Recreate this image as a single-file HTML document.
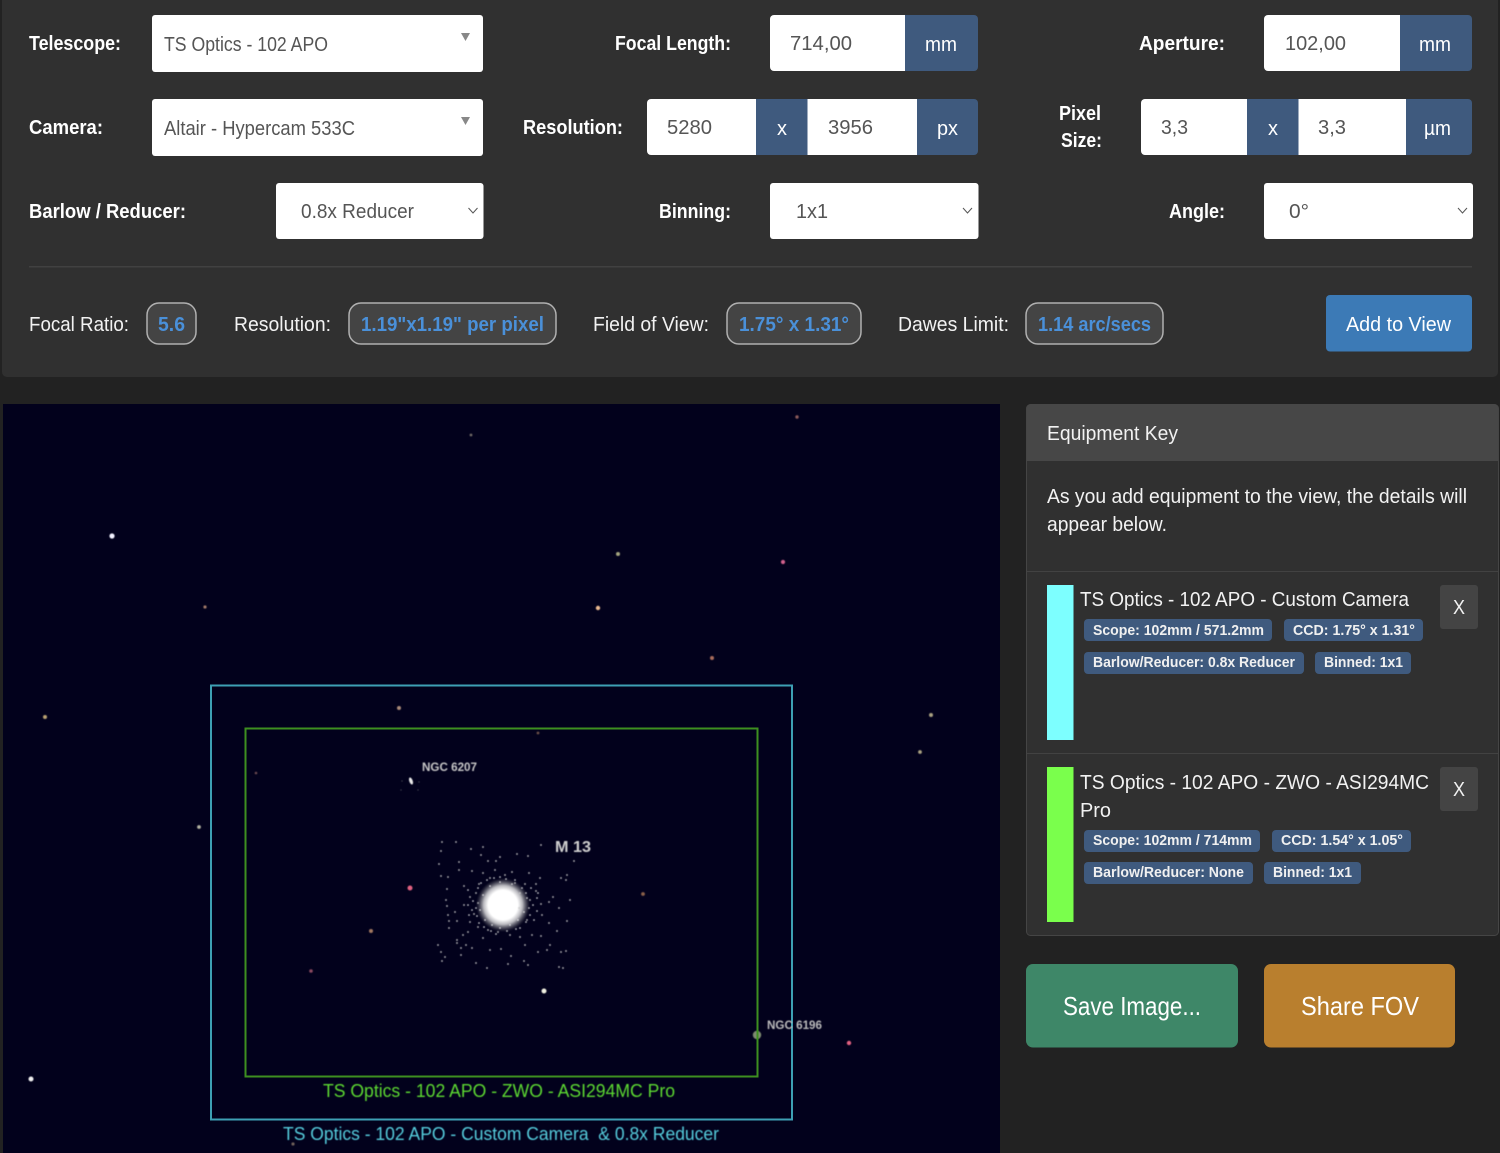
<!DOCTYPE html>
<html lang="en"><head><meta charset="utf-8"><title>FOV Calculator</title>
<style>
html,body{margin:0;padding:0;background:#222;width:1500px;height:1153px;overflow:hidden}
svg{display:block}
text{font-family:"Liberation Sans",sans-serif;white-space:pre}
.l{font-size:20px;font-weight:700;fill:#fff}
.n{font-size:20px;fill:#f2f2f2}
.v{font-size:20px;fill:#555}
.u{font-size:20px;fill:#fff}
.p{font-size:20px;font-weight:700;fill:#4a90d9}
.b{font-size:15px;font-weight:700;fill:#f0f0f0}
.t{font-size:20px;fill:#f2f2f2}
.w{fill:#fff}.a{fill:#3f5a7e}.pill{fill:#444;stroke:#b0b0b0;stroke-width:1.5}
</style></head><body>
<svg width="1500" height="1153" viewBox="0 0 1500 1153" xmlns="http://www.w3.org/2000/svg">
<defs>
<filter id="s" x="-10%" y="-10%" width="120%" height="120%"><feGaussianBlur stdDeviation="0.6"/></filter>
<filter id="s2"><feGaussianBlur stdDeviation="0.5"/></filter>
<radialGradient id="core"><stop offset="0" stop-color="#fff"/><stop offset=".55" stop-color="#fff"/><stop offset=".72" stop-color="#e8e8e8" stop-opacity=".8"/><stop offset=".88" stop-color="#aaa" stop-opacity=".35"/><stop offset="1" stop-color="#666" stop-opacity="0"/></radialGradient>
</defs>
<rect width="1500" height="1153" fill="#222"/>
<rect x="2" y="-10" width="1496" height="387" rx="5" fill="#303030"/>

<!-- Row 1 -->
<text class="l" x="29" y="50" textLength="92" lengthAdjust="spacingAndGlyphs">Telescope:</text>
<rect class="w" x="152" y="15" width="331" height="57" rx="3"/>
<text class="v" x="164" y="51" textLength="164" lengthAdjust="spacingAndGlyphs">TS Optics - 102 APO</text>
<path d="M461 33h9l-4.500 8z" fill="#888"/>
<text class="l" x="615" y="50" textLength="116" lengthAdjust="spacingAndGlyphs">Focal Length:</text>
<rect class="a" x="890" y="15" width="88" height="56" rx="4"/>
<path class="w" d="M774 15H905V71H774a4 4 0 0 1-4-4V19a4 4 0 0 1 4-4z"/>
<text class="v" x="790" y="50" textLength="62" lengthAdjust="spacingAndGlyphs">714,00</text>
<text class="u" x="925" y="51" textLength="32" lengthAdjust="spacingAndGlyphs">mm</text>
<text class="l" x="1139" y="50" textLength="86" lengthAdjust="spacingAndGlyphs">Aperture:</text>
<rect class="a" x="1385" y="15" width="87" height="56" rx="4"/>
<path class="w" d="M1268 15H1400V71H1268a4 4 0 0 1-4-4V19a4 4 0 0 1 4-4z"/>
<text class="v" x="1285" y="50" textLength="61" lengthAdjust="spacingAndGlyphs">102,00</text>
<text class="u" x="1419" y="51" textLength="32" lengthAdjust="spacingAndGlyphs">mm</text>

<!-- Row 2 -->
<text class="l" x="29" y="134" textLength="74" lengthAdjust="spacingAndGlyphs">Camera:</text>
<rect class="w" x="152" y="99" width="331" height="57" rx="3"/>
<text class="v" x="164" y="135" textLength="191" lengthAdjust="spacingAndGlyphs">Altair - Hypercam 533C</text>
<path d="M461 117h9l-4.500 8z" fill="#888"/>
<text class="l" x="523" y="134" textLength="100" lengthAdjust="spacingAndGlyphs">Resolution:</text>
<rect class="a" x="740" y="99" width="238" height="56" rx="4"/>
<path class="w" d="M651 99H756V155H651a4 4 0 0 1-4-4V103a4 4 0 0 1 4-4z"/>
<rect class="w" x="807.500" y="99" width="109.500" height="56"/>
<text class="v" x="667" y="134" textLength="45" lengthAdjust="spacingAndGlyphs">5280</text>
<text class="v" x="828" y="134" textLength="45" lengthAdjust="spacingAndGlyphs">3956</text>
<text class="u" x="777" y="135" textLength="10" lengthAdjust="spacingAndGlyphs">x</text>
<text class="u" x="937" y="135" textLength="21" lengthAdjust="spacingAndGlyphs">px</text>
<text class="l" x="1059" y="120" textLength="42" lengthAdjust="spacingAndGlyphs">Pixel</text>
<text class="l" x="1061" y="147" textLength="41" lengthAdjust="spacingAndGlyphs">Size:</text>
<rect class="a" x="1235" y="99" width="237" height="56" rx="4"/>
<path class="w" d="M1145 99H1247V155H1145a4 4 0 0 1-4-4V103a4 4 0 0 1 4-4z"/>
<rect class="w" x="1298.500" y="99" width="107.500" height="56"/>
<text class="v" x="1161" y="134" textLength="27" lengthAdjust="spacingAndGlyphs">3,3</text>
<text class="v" x="1318" y="134" textLength="28" lengthAdjust="spacingAndGlyphs">3,3</text>
<text class="u" x="1268" y="135" textLength="10" lengthAdjust="spacingAndGlyphs">x</text>
<text class="u" x="1424" y="135" textLength="27" lengthAdjust="spacingAndGlyphs">µm</text>

<!-- Row 3 -->
<text class="l" x="29" y="218" textLength="157" lengthAdjust="spacingAndGlyphs">Barlow / Reducer:</text>
<rect class="w" x="276" y="183" width="207.500" height="56" rx="3"/>
<text class="v" x="301" y="218" textLength="113" lengthAdjust="spacingAndGlyphs">0.8x Reducer</text>
<path d="M468.500 208l4.500 5 4.500-5" fill="none" stroke="#555" stroke-width="1"/>
<text class="l" x="659" y="218" textLength="72" lengthAdjust="spacingAndGlyphs">Binning:</text>
<rect class="w" x="770" y="183" width="208.500" height="56" rx="3"/>
<text class="v" x="796" y="218" textLength="32" lengthAdjust="spacingAndGlyphs">1x1</text>
<path d="M963 208l4.500 5 4.500-5" fill="none" stroke="#555" stroke-width="1"/>
<text class="l" x="1169" y="218" textLength="56" lengthAdjust="spacingAndGlyphs">Angle:</text>
<rect class="w" x="1264" y="183" width="209" height="56" rx="3"/>
<text class="v" x="1289" y="218" textLength="20" lengthAdjust="spacingAndGlyphs">0°</text>
<path d="M1458 208l4.500 5 4.500-5" fill="none" stroke="#555" stroke-width="1"/>

<rect x="29" y="266" width="1443" height="1.500" fill="#414141"/>

<!-- Results -->
<text class="n" x="29" y="331" textLength="100" lengthAdjust="spacingAndGlyphs">Focal Ratio:</text>
<rect class="pill" x="147" y="303" width="49" height="41" rx="12"/>
<text class="p" x="158" y="331" textLength="27" lengthAdjust="spacingAndGlyphs">5.6</text>
<text class="n" x="234" y="331" textLength="97" lengthAdjust="spacingAndGlyphs">Resolution:</text>
<rect class="pill" x="349" y="303" width="207" height="41" rx="12"/>
<text class="p" x="361" y="331" textLength="183" lengthAdjust="spacingAndGlyphs">1.19"x1.19" per pixel</text>
<text class="n" x="593" y="331" textLength="116" lengthAdjust="spacingAndGlyphs">Field of View:</text>
<rect class="pill" x="727" y="303" width="134" height="41" rx="12"/>
<text class="p" x="739" y="331" textLength="110" lengthAdjust="spacingAndGlyphs">1.75° x 1.31°</text>
<text class="n" x="898" y="331" textLength="111" lengthAdjust="spacingAndGlyphs">Dawes Limit:</text>
<rect class="pill" x="1026" y="303" width="137" height="41" rx="12"/>
<text class="p" x="1038" y="331" textLength="113" lengthAdjust="spacingAndGlyphs">1.14 arc/secs</text>
<rect x="1326" y="295" width="146" height="56.500" rx="4" fill="#3c7ab6"/>
<text class="u" x="1346" y="331" textLength="105" lengthAdjust="spacingAndGlyphs">Add to View</text>

<!-- Sky -->
<rect x="3" y="404" width="997" height="749" fill="#02011c"/>
<g filter="url(#s2)">
<circle cx="112" cy="536" r="2.600" fill="#f2f2ff"/>
<circle cx="471" cy="435" r="1.400" fill="#6f6a66"/>
<circle cx="797" cy="417" r="1.700" fill="#8a5a5a"/>
<circle cx="205" cy="607" r="1.600" fill="#a07868"/>
<circle cx="618" cy="554" r="2" fill="#a3a37e"/>
<circle cx="783" cy="562" r="2.100" fill="#d0608c"/>
<circle cx="598" cy="608" r="2.200" fill="#e8b890"/>
<circle cx="712" cy="658" r="2" fill="#a86c5c"/>
<circle cx="45" cy="717" r="2" fill="#b8a070"/>
<circle cx="399" cy="708" r="2" fill="#a88878"/>
<circle cx="538" cy="733" r="1.400" fill="#6a5048"/>
<circle cx="931" cy="715" r="2" fill="#a8a080"/>
<circle cx="920" cy="752" r="1.900" fill="#a8a080"/>
<circle cx="256" cy="773" r="1.300" fill="#6a4a50"/>
<circle cx="199" cy="827" r="1.900" fill="#b0b0a0"/>
<circle cx="410" cy="888" r="2.500" fill="#e06080"/>
<circle cx="643" cy="894" r="1.900" fill="#8a6048"/>
<circle cx="371" cy="931" r="2" fill="#a07860"/>
<circle cx="311" cy="971" r="1.800" fill="#8a4a60"/>
<circle cx="544" cy="991" r="2.500" fill="#f0f0e0"/>
<circle cx="757" cy="1035" r="4.200" fill="#7d8a70"/>
<circle cx="849" cy="1043" r="2.200" fill="#e06080"/>
<circle cx="31" cy="1079" r="2.500" fill="#f0f0f0"/>
<circle cx="293" cy="1144" r="1.600" fill="#70605a"/>
<ellipse cx="411" cy="781" rx="1.700" ry="3.700" fill="#e8e8e8" transform="rotate(-20 411 781)"/>
<path d="M402 781h0M419 782h0M401 790h0M418 790h0" stroke="#777" stroke-width="1" stroke-linecap="round"/>
</g>
<!-- M13 cluster -->
<g filter="url(#s2)">
<circle cx="503" cy="905" r="27" fill="url(#core)"/>
<path stroke="#c8c8c8" stroke-width="1.700" stroke-linecap="round" fill="none" d="M442 842h0M456 842h0M441 851h0M471 849h0M483 847h0M481 855h0M439 864h0M459 870h0M472 871h0M459 862h0M448 877h0M441 876h0M488 861h0M500 857h0M517 854h0M528 856h0M541 845h0M574 861h0M567 875h0M561 878h0M529 873h0M495 870h0M496 861h0M479 884h0M464 886h0M447 889h0M446 900h0M464 905h0M448 915h0M447 906h0M449 921h0M449 928h0M457 921h0M463 935h0M478 927h0M457 940h0M457 943h0M466 945h0M441 952h0M445 957h0M442 961h0M461 955h0M472 948h0M490 950h0M501 949h0M511 956h0M476 963h0M487 968h0M508 964h0M524 961h0M528 965h0M538 952h0M547 950h0M561 952h0M566 951h0M559 967h0M563 968h0M550 945h0M557 931h0M541 936h0M532 935h0M527 920h0M542 915h0M549 923h0M541 904h0M549 902h0M566 880h0M570 900h0M559 908h0M567 921h0M519 908h0M520 893h0M515 883h0M525 884h0M536 891h0M530 900h0M476 893h0M470 897h0M478 903h0M474 914h0M488 930h0M498 932h0M510 935h0M520 937h0M525 945h0M483 938h0M470 922h0M468 932h0M505 875h0M512 872h0M490 878h0M483 873h0M540 878h0M536 884h0M553 897h0M455 912h0M438 945h0M461 948h0"/>
<path stroke="#efefef" stroke-width="1.600" stroke-linecap="round" fill="none" d="M483 895h0M480 910h0M485 920h0M492 925h0M500 928h0M510 925h0M518 920h0M524 912h0M527 898h0M522 888h0M512 884h0M500 882h0M490 886h0M478 888h0M476 908h0M484 927h0M496 934h0M516 929h0M530 915h0M533 905h0M531 888h0M506 879h0M494 878h0M473 901h0M477 916h0M481 883h0M487 880h0M500 877h0M515 880h0M526 893h0M529 908h0M526 922h0M520 928h0M507 931h0M491 931h0M479 923h0M472 910h0M537 898h0M537 911h0M534 920h0M538 893h0M468 905h0M469 915h0M468 890h0"/>
</g>
<rect x="211" y="685.500" width="581" height="434" fill="none" stroke="#3da0b4" stroke-width="2"/>
<rect x="245.500" y="728.500" width="512" height="348" fill="none" stroke="#3d8f20" stroke-width="2"/>
<g filter="url(#s2)">
<text x="422" y="771" font-size="11.500" font-weight="700" fill="#c8c8c8" textLength="55" lengthAdjust="spacingAndGlyphs">NGC 6207</text>
<text x="555" y="852" font-size="16" font-weight="700" fill="#cfcfcf" textLength="36" lengthAdjust="spacingAndGlyphs">M 13</text>
<text x="767" y="1029" font-size="11.500" font-weight="700" fill="#bcbcbc" textLength="55" lengthAdjust="spacingAndGlyphs">NGC 6196</text>
<text x="323" y="1097" font-size="18" fill="#5cd830" textLength="352" lengthAdjust="spacingAndGlyphs">TS Optics - 102 APO - ZWO - ASI294MC Pro</text>
<text x="283" y="1140" font-size="18" fill="#55ccdc" textLength="436" lengthAdjust="spacingAndGlyphs">TS Optics - 102 APO - Custom Camera  &amp; 0.8x Reducer</text>
</g>

<!-- Equipment panel -->
<rect x="1026.500" y="404.500" width="472" height="531" rx="4" fill="#303030" stroke="#454545"/>
<path d="M1031 404H1494a4 4 0 0 1 4 4V461H1027V408a4 4 0 0 1 4-4z" fill="#474747"/>
<text class="t" x="1047" y="440" textLength="131" lengthAdjust="spacingAndGlyphs">Equipment Key</text>
<text class="t" x="1047" y="503" textLength="420" lengthAdjust="spacingAndGlyphs">As you add equipment to the view, the details will</text>
<text class="t" x="1047" y="531" textLength="120" lengthAdjust="spacingAndGlyphs">appear below.</text>
<rect x="1027" y="571" width="471" height="1" fill="#424242"/>

<rect x="1047" y="585" width="26.500" height="155" fill="#7dffff"/>
<text class="t" x="1080" y="606" textLength="329" lengthAdjust="spacingAndGlyphs">TS Optics - 102 APO - Custom Camera</text>
<rect x="1440" y="585" width="38" height="44" rx="3" fill="#444"/>
<text class="t" x="1453" y="614" textLength="12" lengthAdjust="spacingAndGlyphs">X</text>
<rect class="a" x="1084" y="619" width="188" height="22" rx="4"/>
<text class="b" x="1093" y="635" textLength="171" lengthAdjust="spacingAndGlyphs">Scope: 102mm / 571.2mm</text>
<rect class="a" x="1284" y="619" width="139" height="22" rx="4"/>
<text class="b" x="1293" y="635" textLength="122" lengthAdjust="spacingAndGlyphs">CCD: 1.75° x 1.31°</text>
<rect class="a" x="1084" y="652" width="220" height="22" rx="4"/>
<text class="b" x="1093" y="667" textLength="202" lengthAdjust="spacingAndGlyphs">Barlow/Reducer: 0.8x Reducer</text>
<rect class="a" x="1315" y="652" width="96" height="22" rx="4"/>
<text class="b" x="1324" y="667" textLength="79" lengthAdjust="spacingAndGlyphs">Binned: 1x1</text>

<rect x="1027" y="753" width="471" height="1" fill="#424242"/>
<rect x="1047" y="767" width="26.500" height="155" fill="#7aff4c"/>
<text class="t" x="1080" y="789" textLength="349" lengthAdjust="spacingAndGlyphs">TS Optics - 102 APO - ZWO - ASI294MC</text>
<text class="t" x="1080" y="817" textLength="31" lengthAdjust="spacingAndGlyphs">Pro</text>
<rect x="1440" y="767" width="38" height="44" rx="3" fill="#444"/>
<text class="t" x="1453" y="796" textLength="12" lengthAdjust="spacingAndGlyphs">X</text>
<rect class="a" x="1084" y="830" width="176" height="22" rx="4"/>
<text class="b" x="1093" y="845" textLength="159" lengthAdjust="spacingAndGlyphs">Scope: 102mm / 714mm</text>
<rect class="a" x="1272" y="830" width="139" height="22" rx="4"/>
<text class="b" x="1281" y="845" textLength="122" lengthAdjust="spacingAndGlyphs">CCD: 1.54° x 1.05°</text>
<rect class="a" x="1084" y="862" width="169" height="22" rx="4"/>
<text class="b" x="1093" y="877" textLength="151" lengthAdjust="spacingAndGlyphs">Barlow/Reducer: None</text>
<rect class="a" x="1264" y="862" width="97" height="22" rx="4"/>
<text class="b" x="1273" y="877" textLength="79" lengthAdjust="spacingAndGlyphs">Binned: 1x1</text>

<!-- Action buttons -->
<rect x="1026" y="964" width="212" height="83.500" rx="7" fill="#3e8768"/>
<text x="1063" y="1015" font-size="26" fill="#fff" textLength="138" lengthAdjust="spacingAndGlyphs">Save Image...</text>
<rect x="1264" y="964" width="191" height="83.500" rx="7" fill="#b97f2e"/>
<text x="1301" y="1015" font-size="26" fill="#fff" textLength="118" lengthAdjust="spacingAndGlyphs">Share FOV</text>
</svg>
</body></html>
